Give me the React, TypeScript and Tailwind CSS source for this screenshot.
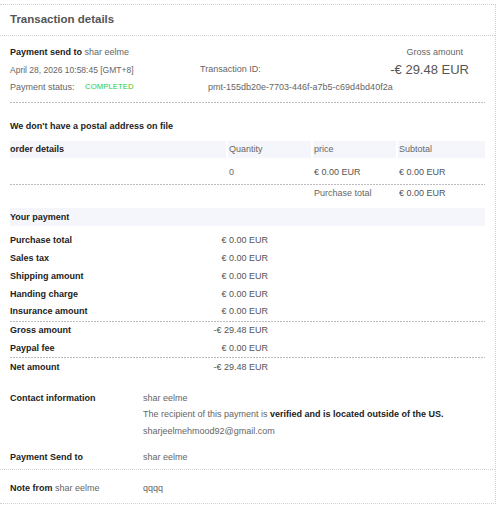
const dash =
  "h-px bg-[linear-gradient(to_right,#bcbcbc_2px,transparent_2px)] bg-[length:3px_1px]";

const orderCols = "grid grid-cols-[216px_83px_83px_87px] gap-x-[2px]";

const paymentRows = [
  { label: "Purchase total", value: "€ 0.00 EUR" },
  { label: "Sales tax", value: "€ 0.00 EUR" },
  { label: "Shipping amount", value: "€ 0.00 EUR" },
  { label: "Handing charge", value: "€ 0.00 EUR" },
  { label: "Insurance amount", value: "€ 0.00 EUR" },
];

function PayRow({ label, value }: { label: string; value: string }) {
  return (
    <div className="flex h-[17.75px] w-[258px] items-center justify-between">
      <span className="font-bold text-[#222]">{label}</span>
      <span className="text-[#555]">{value}</span>
    </div>
  );
}

export default function App() {
  return (
    <div className="h-[507px] w-[500px] bg-white pt-[4px] font-['Liberation_Sans',Arial,sans-serif] text-[9px] leading-none text-[#666]">
      <div className="w-[496px] border-t border-r border-b border-dotted border-[#d2d2d2]">
        {/* Header */}
        <div className="flex h-[31px] items-center border-b border-dotted border-[#d2d2d2] pl-[10px] text-[11.5px] font-bold text-[#555]">
          Transaction details
        </div>

        <div className="px-[10px] pt-[7px]">
          {/* Summary */}
          <div className="flex h-[18px] items-center justify-between">
            <span>
              <span className="font-bold text-[#222]">Payment send to</span>{" "}
              <span>shar eelme</span>
            </span>
            <span className="mr-[22px]">Gross amount</span>
          </div>
          <div className="flex h-[17.5px] items-center">
            <span className="w-[190px] text-[8.5px]">April 28, 2026 10:58:45 [GMT+8]</span>
            <span className="flex-1">Transaction ID:</span>
            <span className="mr-[16px] text-[13px] text-[#555]">-€ 29.48 EUR</span>
          </div>
          <div className="flex h-[17px] items-center">
            <span className="w-[75px]">Payment status:</span>
            <span className="w-[123px] text-[7.8px] text-[#2ecc3a]">COMPLETED</span>
            <span>pmt-155db20e-7703-446f-a7b5-c69d4bd40f2a</span>
          </div>
          <div className={`mt-[6.5px] ${dash}`} />

          {/* Order details */}
          <div className="mt-[14px] flex h-[18px] items-center font-bold text-[#222]">
            We don't have a postal address on file
          </div>
          <div className={`mt-[6px] ${orderCols}`}>
            <div className="flex h-[17px] items-center bg-[#f5f6fc] font-bold text-[#222]">order details</div>
            <div className="flex h-[17px] items-center bg-[#f5f6fc] pl-[1px]">Quantity</div>
            <div className="flex h-[17px] items-center bg-[#f5f6fc] pl-[1px]">price</div>
            <div className="flex h-[17px] items-center bg-[#f5f6fc] pl-[1px]">Subtotal</div>
          </div>
          <div className={`mt-[5px] h-[18px] items-center ${orderCols}`}>
            <div />
            <div className="pl-[1px]">0</div>
            <div className="pl-[1px] text-[#555]">€ 0.00 EUR</div>
            <div className="pl-[1px] text-[#555]">€ 0.00 EUR</div>
          </div>
          <div className={`mt-[3px] ${dash}`} />
          <div className={`h-[17px] items-center ${orderCols}`}>
            <div />
            <div />
            <div className="pl-[1px]">Purchase total</div>
            <div className="pl-[1px] text-[#555]">€ 0.00 EUR</div>
          </div>

          {/* Your payment */}
          <div className="mt-[6px] flex h-[18px] items-center bg-[#f5f6fc] font-bold text-[#222]">
            Your payment
          </div>
          <div className="mt-[6px]">
            {paymentRows.map((r) => (
              <PayRow key={r.label} label={r.label} value={r.value} />
            ))}
          </div>
          <div className={dash} />
          <PayRow label="Gross amount" value="-€ 29.48 EUR" />
          <PayRow label="Paypal fee" value="€ 0.00 EUR" />
          <div className={dash} />
          <PayRow label="Net amount" value="-€ 29.48 EUR" />

          {/* Contact */}
          <div className="mt-[14px] flex">
            <div className="flex h-[16.5px] w-[133px] items-center font-bold text-[#222]">
              Contact information
            </div>
            <div className="flex flex-col">
              <div className="flex h-[16.5px] items-center">shar eelme</div>
              <div className="flex h-[16.5px] items-center">
                The recipient of this payment is&nbsp;
                <span className="font-bold text-[#222]">verified and is located outside of the US.</span>
              </div>
              <div className="flex h-[16.5px] items-center">sharjeelmehmood92@gmail.com</div>
            </div>
          </div>
          <div className="mt-[9.5px] flex h-[16.5px] items-center">
            <span className="w-[133px] font-bold text-[#222]">Payment Send to</span>
            <span>shar eelme</span>
          </div>
          <div className="-mx-[10px] mt-[3px] border-t border-dotted border-[#d2d2d2]" />
          <div className="mt-[10.5px] mb-[6px] flex h-[17px] items-center">
            <span className="w-[133px]">
              <span className="font-bold text-[#222]">Note from</span> shar eelme
            </span>
            <span>qqqq</span>
          </div>
        </div>
      </div>
    </div>
  );
}
